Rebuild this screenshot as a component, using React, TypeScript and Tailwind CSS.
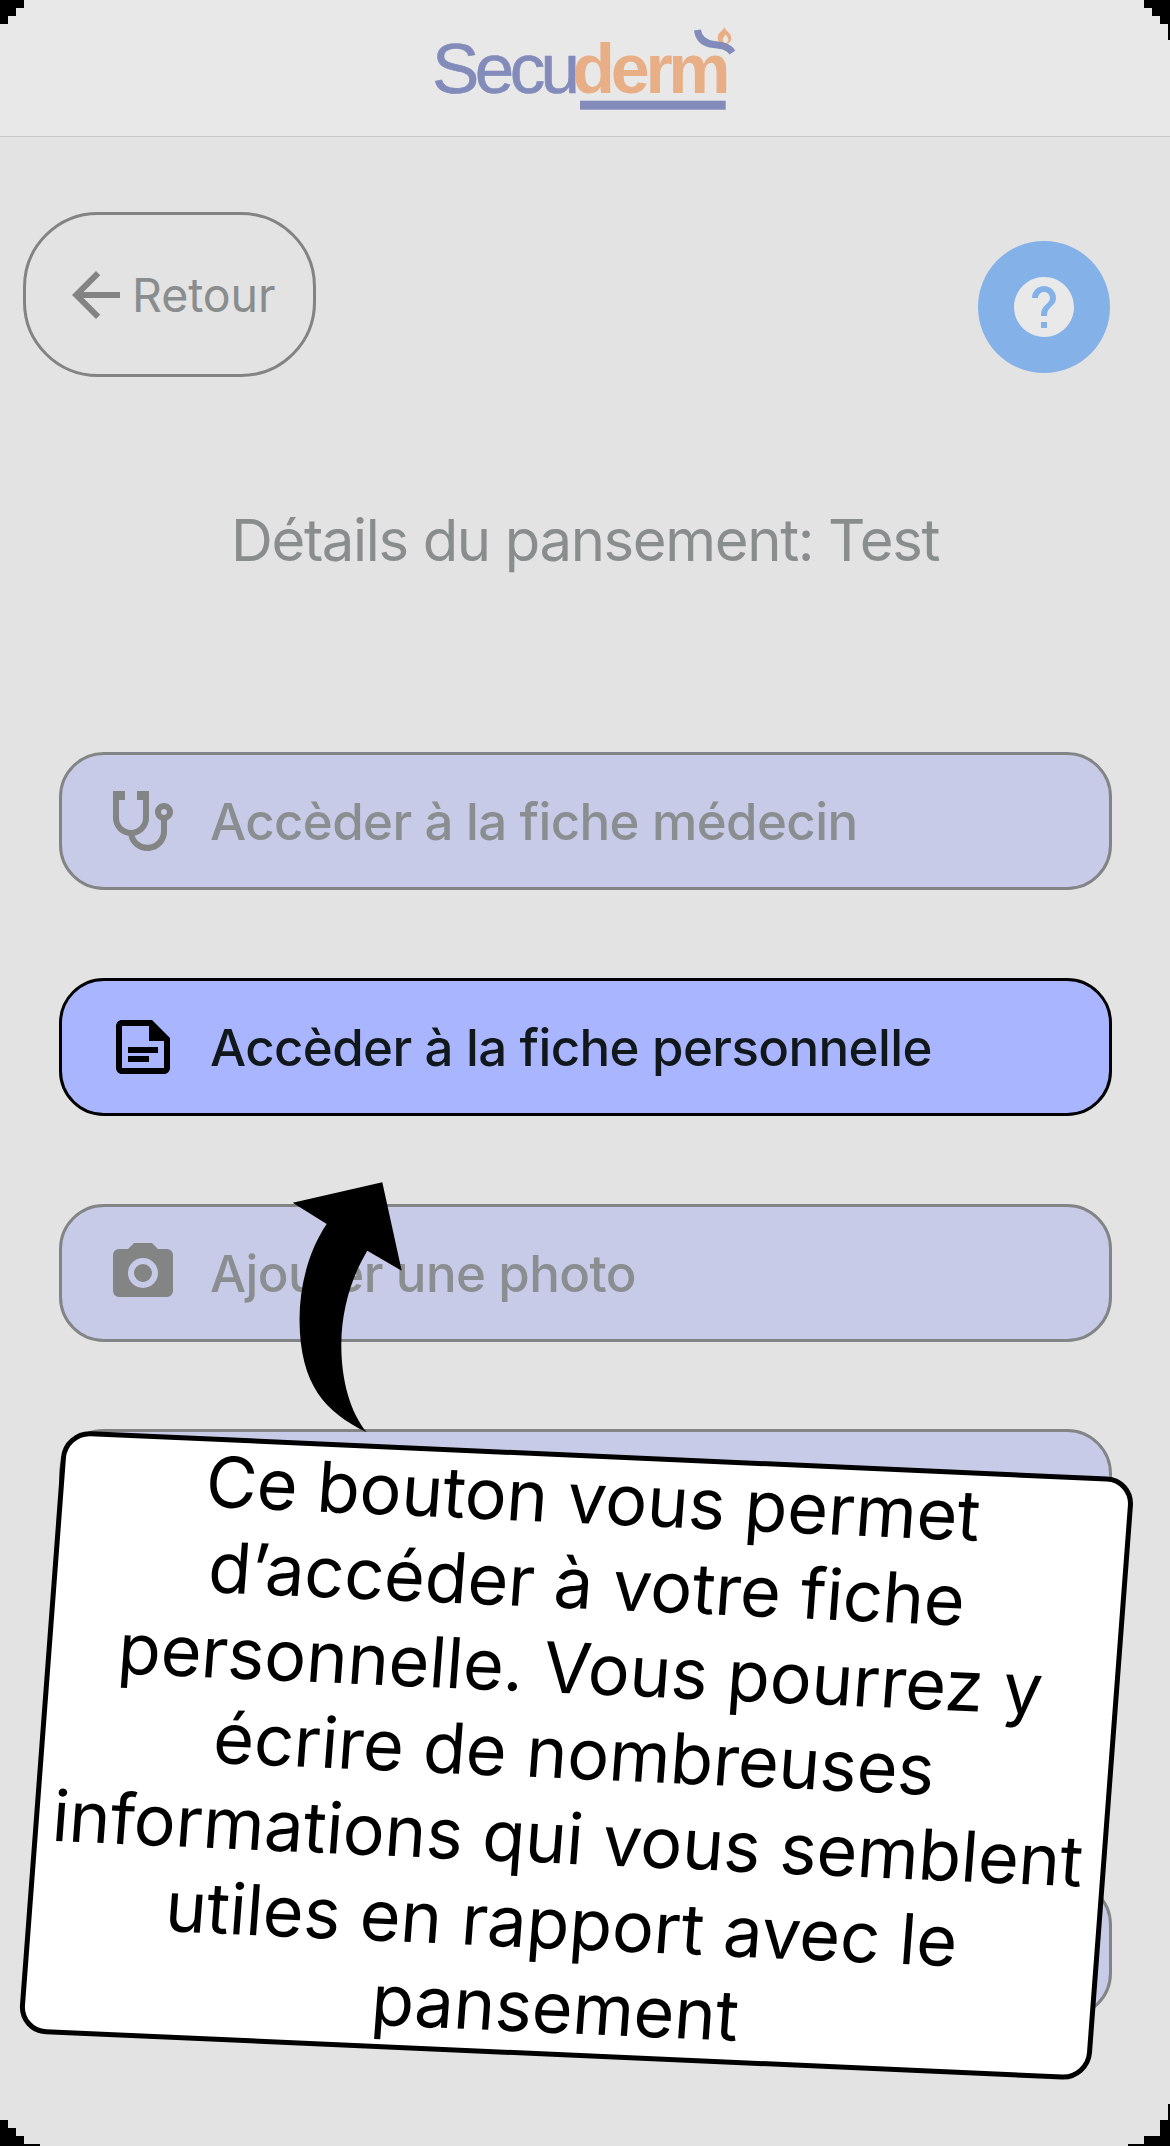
import type { ReactNode } from "react";

const ICONS = {
  doctor:
    "M19 8C19.56 8 20 8.43 20 9C20 9.57 19.57 10 19 10C18.43 10 18 9.57 18 9C18 8.43 18.43 8 19 8M2 2V11C2 13.96 4.19 16.5 7.14 16.91C7.76 19.92 10.42 22 13.5 22C17.09 22 20 19.09 20 15.5V11.81C21.16 11.39 22 10.29 22 9C22 7.34 20.66 6 19 6C17.34 6 16 7.34 16 9C16 10.29 16.84 11.4 18 11.81V15.41C18 17.91 16 19.91 13.5 19.91C11.5 19.91 9.82 18.7 9.22 16.9C12 16.3 14 13.8 14 11V2H10V5H12V11C12 13.2 10.2 15 8 15C5.8 15 4 13.2 4 11V5H6V2H2Z",
  note:
    "M15 3H5C3.9 3 3 3.9 3 5V19C3 20.1 3.9 21 5 21H19C20.1 21 21 20.1 21 19V9L15 3ZM19 19H5V5H14V10H19V19ZM7 12H17V14H7V12ZM7 15H14V17H7V15Z",
  camera:
    "M4 4H7L9 2H15L17 4H20A2 2 0 0 1 22 6V18A2 2 0 0 1 20 20H4A2 2 0 0 1 2 18V6A2 2 0 0 1 4 4M12 7A5 5 0 0 0 7 12A5 5 0 0 0 12 17A5 5 0 0 0 17 12A5 5 0 0 0 12 7M12 9A3 3 0 0 1 15 12A3 3 0 0 1 12 15A3 3 0 0 1 9 12A3 3 0 0 1 12 9Z",
  back: "M20 11H7.83L13.42 5.41L12 4L4 12L12 20L13.41 18.59L7.83 13H20V11Z",
  help:
    "M12 2C6.48 2 2 6.48 2 12s4.48 10 10 10 10-4.48 10-10S17.52 2 12 2zm1 17h-2v-2h2v2zm2.07-7.75l-.9.92C13.45 12.9 13 13.5 13 15h-2v-.5c0-1.1.45-2.1 1.17-2.83l1.24-1.26c.37-.36.59-.86.59-1.41 0-1.1-.9-2-2-2s-2 .9-2 2H8c0-2.21 1.79-4 4-4s4 1.79 4 4c0 .88-.36 1.68-.93 2.25z",
};

function Icon({ path }: { path: string }) {
  return (
    <svg viewBox="0 0 24 24" className="size-[72px] shrink-0" fill="currentColor" fillRule="evenodd">
      <path d={path} />
    </svg>
  );
}

function Logo() {
  return (
    <svg width="330" height="130" viewBox="420 0 330 130">
      <text x="432" y="93" className="font-['Liberation_Sans',sans-serif] text-[71px] tracking-[-4.6px]" fill="#838bba" stroke="#838bba" strokeWidth="0.6">
        Secu
      </text>
      <text x="572.3" y="93" className="font-['Liberation_Sans',sans-serif] text-[70px] font-bold tracking-[-4.3px]" fill="#e8ae85">
        derm
      </text>
      <rect x="580" y="100.7" width="145.7" height="9" fill="#838bba" />
      <path
        fillRule="evenodd"
        fill="#e8ae85"
        d="M724.3 27C725.5 31 731.4 33 731.4 38C731.4 41 729.5 43 727 44H721C718.5 42 717.4 39.5 717.7 36.5C718.3 32.5 723 31 724.3 27ZM725.8 34C725 36 722.7 37.5 722.7 39.8C722.7 41.8 724 43 725.5 43C727.3 43 728.5 41.3 728.4 39.3C728.1 37 726.2 36 725.8 34Z"
      />
      <path d="M697.5 30C698.5 39 705 43.5 714 44.5C723 45.5 728 46.5 732.5 52.5" fill="none" stroke="#838bba" strokeWidth="7" />
    </svg>
  );
}

function MenuButton({ active, icon, children }: { active?: boolean; icon?: string; children?: ReactNode }) {
  return (
    <button
      className={
        active
          ? "flex h-[138px] items-center gap-[31px] rounded-[45px] border-3 border-black bg-[#aab5ff] pl-[45px] text-black"
          : "flex h-[138px] items-center gap-[31px] rounded-[45px] border-3 border-[#838486] bg-[#c8cbe8] pl-[45px] text-[#838484]"
      }
    >
      {icon && <Icon path={icon} />}
      <span
        className={
          active
            ? "pt-[2px] text-[51px] font-medium tracking-[-0.6px] whitespace-nowrap text-[#11181c]"
            : "pt-[2px] text-[51px] font-medium tracking-[-0.6px] whitespace-nowrap text-[#8a8e90]"
        }
      >
        {children}
      </span>
    </button>
  );
}

const HELP_LINES = [
  "Ce bouton vous permet",
  "d’accéder à votre fiche",
  "personnelle. Vous pourrez y",
  "écrire de nombreuses",
  "informations qui vous semblent",
  "utiles en rapport avec le",
  "pansement",
];

export default function App() {
  return (
    <div className="relative flex h-[2146px] w-[1170px] flex-col overflow-hidden bg-[#e3e3e3] font-[Inter,sans-serif]">
      <header className="flex h-[137px] shrink-0 justify-center border-b border-[#c6c6c7] bg-[#e8e8e8]">
        <Logo />
      </header>

      <div className="flex items-start justify-between pt-[75px] pr-[60px] pl-[23px]">
        <button className="flex h-[165px] w-[293px] items-center rounded-[75px] border-3 border-[#838383] pl-[34px] text-[#838383]">
          <Icon path={ICONS.back} />
          <span className="pt-[2px] text-[46.5px] tracking-[-0.1px] text-[#8a8d8e]">Retour</span>
        </button>
        <button className="mt-[29px] flex size-[132px] items-center justify-center rounded-full bg-[#84b2e8] text-[#e9e9e9]">
          <Icon path={ICONS.help} />
        </button>
      </div>

      <h1 className="mt-[123px] text-center text-[58px] leading-[80px] tracking-[-1.35px] text-[#8a8d8e]">
        Détails du pansement: Test
      </h1>

      <main className="mt-[172px] flex flex-col gap-[88px] pr-[58px] pl-[59px]">
        <MenuButton icon={ICONS.doctor}>Accèder à la fiche médecin</MenuButton>
        <MenuButton icon={ICONS.note} active>
          Accèder à la fiche personnelle
        </MenuButton>
        <MenuButton icon={ICONS.camera}>Ajouter une photo</MenuButton>
        <div className="-mt-px flex flex-col gap-[88px]">
          <MenuButton />
          <MenuButton />
          <div className="-mt-px flex flex-col">
            <MenuButton />
          </div>
        </div>
      </main>

      <svg className="absolute top-[1180px] left-[290px]" width="115" height="255" viewBox="290 1180 115 255">
        <path d="M292.7 1202.7L382.3 1182.3L401.7 1270.7L367.3 1250.7C351 1278 341.7 1310 341.3 1343C341 1380 350 1412 366.7 1432.3C325 1412 300 1385 299.5 1320C299.5 1285 309 1250 326.7 1224Z" />
      </svg>

      <div className="absolute top-[1430px] left-[63px] h-[603px] w-[1072px] origin-top-left [transform:matrix(1,0.0445,-0.0748,1,0,0)] rounded-[28px] border-5 border-black bg-white text-center text-[70px] leading-[84.9px] tracking-[-0.15px] text-black">
        <div className="-mt-[2px] -ml-[5px] flex flex-col">
          {HELP_LINES.map((line) => (
            <span key={line} className="whitespace-nowrap">
              {line}
            </span>
          ))}
        </div>
      </div>

      <svg className="absolute inset-0" width="1170" height="2146" shapeRendering="crispEdges">
        <path d="M0 0H24V8H16V16H8V24H0Z" />
        <path d="M1144 0H1170V40H1168V24H1160V16H1152V8H1144Z" />
        <path d="M0 2146V2120H8V2128H16V2136H24V2144H40V2146Z" />
        <path d="M1170 2146V2104H1168V2120H1160V2136H1144V2144H1128V2146Z" />
      </svg>
    </div>
  );
}
